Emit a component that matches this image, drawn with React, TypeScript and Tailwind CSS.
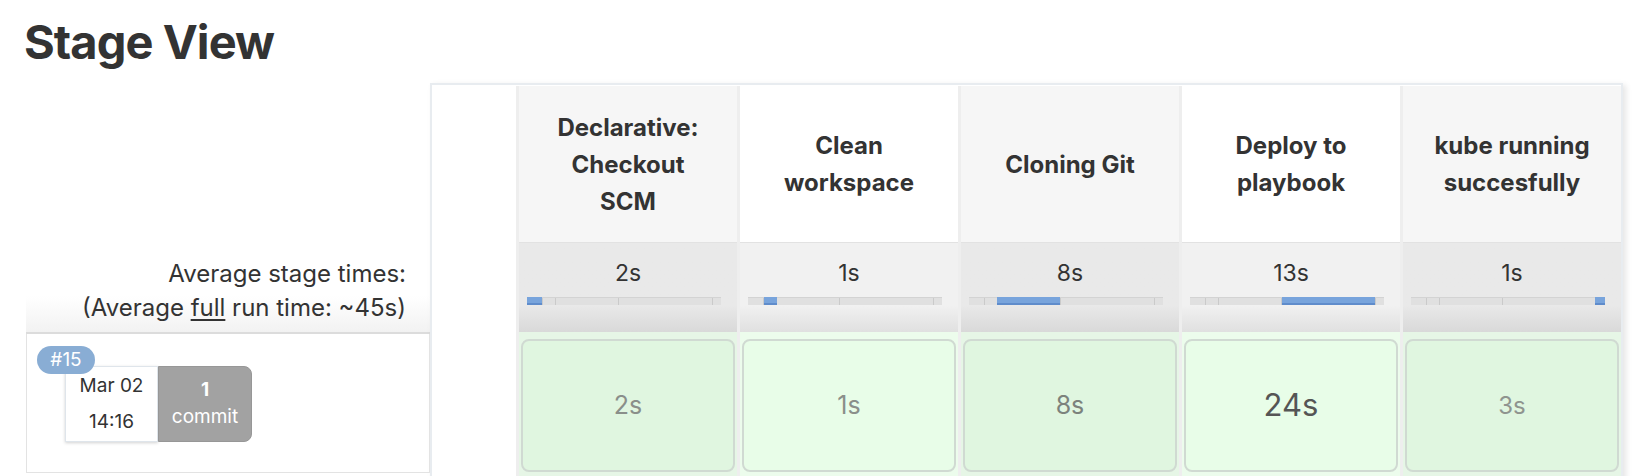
import React from 'react';

interface Stage {
  name: string;
  avg: string;
  seg: [number, number];
  run: string;
  runClass: string;
}

const stages: Stage[] = [
  { name: 'Declarative: Checkout SCM', avg: '2s', seg: [0, 15], run: '2s', runClass: 'text-[25px] text-[#8a8f8a]' },
  { name: 'Clean workspace', avg: '1s', seg: [16, 29], run: '1s', runClass: 'text-[25px] text-[#8a8f8a]' },
  { name: 'Cloning Git', avg: '8s', seg: [28, 91], run: '8s', runClass: 'text-[25px] text-[#7c827c]' },
  { name: 'Deploy to playbook', avg: '13s', seg: [92, 185], run: '24s', runClass: 'text-[31px] text-[#555]' },
  { name: 'kube running succesfully', avg: '1s', seg: [184, 194], run: '3s', runClass: 'text-[24px] text-[#8f948f]' },
];

const ticks = [15, 28, 91, 185];

const Bar: React.FC<{ seg: [number, number] }> = ({ seg }) => (
  <div className="relative h-[8px] bg-[#e0e0e0] border-t border-[#d3d3d3]">
    {ticks.map((t) => (
      <div key={t} className="absolute top-0 bottom-0 w-px bg-[#cacaca]" style={{ left: t }} />
    ))}
    <div
      className="absolute -top-px bottom-0 bg-[#78a4dc] border-b-2 border-[#5f8ccb]"
      style={{ left: seg[0], width: seg[1] - seg[0] }}
    />
  </div>
);

const StageColumn: React.FC<{ stage: Stage; odd: boolean }> = ({ stage, odd }) => (
  <div className="w-[221px] flex flex-col border-l-[3px] border-[#eeeeee]">
    {/* header */}
    <div className={`h-[156px] flex items-center justify-center px-[26px] text-center ${odd ? 'bg-[#f6f6f6]' : 'bg-white'}`}>
      <span className="text-[24px] leading-[37px] font-bold text-[#333]">{stage.name}</span>
    </div>
    {/* average */}
    <div
      className={`h-[90px] border-t border-[#e2e2e2] pt-[16px] bg-linear-to-b ${odd ? 'from-[#e9e9e9] from-70% to-[#d9d9d9]' : 'from-[#f1f1f1] from-70% to-[#e0e0e0]'}`}
    >
      <div className="text-center text-[23px] leading-[28px] text-[#333]">{stage.avg}</div>
      <div className="mt-[10px] pl-[8px] pr-[16px]">
        <Bar seg={stage.seg} />
      </div>
    </div>
    {/* run */}
    <div className={`flex-1 pt-[7px] px-[2px] pb-[30px] ${odd ? 'bg-[#e6f6e6]' : 'bg-[#ecfcec]'}`}>
      <div
        className={`h-[133px] rounded-[8px] border-2 border-[#d0dad2] flex items-center justify-center ${odd ? 'bg-[#e0f6e0]' : 'bg-[#e8fde8]'}`}
      >
        <span className={stage.runClass}>{stage.run}</span>
      </div>
    </div>
  </div>
);

export default function App() {
  return (
    <div className="min-h-screen bg-white font-['Inter','Noto_Sans',sans-serif] text-[#333] pt-[14px]">
      <h2 className="h-[56px] pl-[24px] text-[47px] leading-[56px] font-bold tracking-[-0.02em] text-[#333]">Stage View</h2>

      <div className="mt-[13px] flex items-start">
        {/* left: summary + builds */}
        <div className="ml-[26px] w-[404px] flex flex-col">
          <div className="h-[159px]" />
          <div className="h-[92px] flex flex-col justify-center items-end pt-[8px] pr-[24px] border-b-2 border-[#dcdcdc] bg-linear-to-b from-white from-60% to-[#f2f2f2] text-[24px] leading-[34px] text-[#333]">
            <div>Average stage times:</div>
            <div>
              (Average <span className="underline underline-offset-[3px]">full</span> run time: ~45s)
            </div>
          </div>
          <div className="relative h-[139px] border-x border-b border-[#e3e3e3] pl-[38px] pt-[32px]">
            <div className="absolute left-[10px] top-[12px] z-10 w-[58px] h-[28px] rounded-full bg-[#89add4] text-white text-[19px] leading-[28px] text-center">
              #15
            </div>
            <div className="flex">
              <div className="w-[93px] h-[76px] bg-white border border-[#dfe5eb] shadow-[0_1px_3px_rgba(0,0,0,0.18)] flex flex-col justify-center items-center text-[19px] leading-[36px] text-[#333]">
                <div>Mar 02</div>
                <div>14:16</div>
              </div>
              <div className="w-[94px] h-[76px] bg-[#a2a2a2] border border-[#979797] rounded-r-[8px] flex flex-col items-center pt-[9px] text-white text-[19px] leading-[27px]">
                <div className="font-bold">1</div>
                <div>commit</div>
              </div>
            </div>
          </div>
        </div>

        {/* right: stage table */}
        <div className="w-[1193px] border-2 border-[#e8ecf0] pt-[1px] bg-white shadow-[3px_2px_6px_rgba(0,0,0,0.1)] flex">
          <div className="w-[84px] bg-white" />
          {stages.map((s, i) => (
            <StageColumn key={s.name} stage={s} odd={i % 2 === 0} />
          ))}
        </div>
      </div>
    </div>
  );
}
